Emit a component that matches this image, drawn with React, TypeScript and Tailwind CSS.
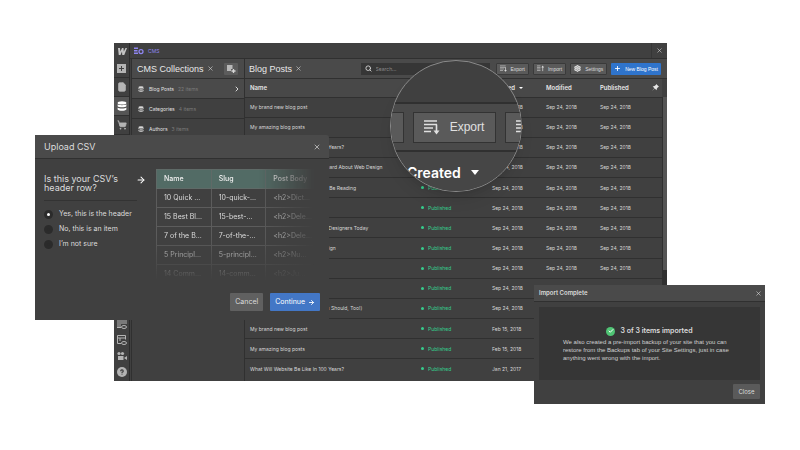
import React from "react";
import {
  ArrowRight, Check, HelpCircle, Plus, Search, Settings, ShoppingCart, X, File, ChevronRight,
} from "lucide-react";

type Row = { name: string; created: string };

const SEP = "Sep 24, 2018";
const rows: Row[] = [
  { name: "My brand new blog post", created: SEP },
  { name: "My amazing blog posts", created: SEP },
  { name: "What Will Website Be Like In 100 Years?", created: SEP },
  { name: "14 Common Things You Never Heard About Web Design", created: SEP },
  { name: "10 Web Design Blogs You Should Be Reading", created: SEP },
  { name: "Why We Love Design", created: SEP },
  { name: "7 of the Best New Tools For Web Designers Today", created: SEP },
  { name: "5 Principles of Effective Web Design", created: SEP },
  { name: "15 Best Blogs", created: SEP },
  { name: "Design Trends", created: SEP },
  { name: "Why I Love Coding (And Why You Should, Too!)", created: SEP },
  { name: "My brand new blog post", created: "Feb 15, 2018" },
  { name: "My amazing blog posts", created: "Feb 15, 2018" },
  { name: "What Will Website Be Like In 100 Years?", created: "Jan 21, 2017" },
];

const collections = [
  { name: "Blog Posts", count: "22 items" },
  { name: "Categories", count: "4 items" },
  { name: "Authors", count: "3 items" },
];

const csv = [
  ["10 Quick ...", "10-quick-...", "<h2>Dict..."],
  ["15 Best Bl...", "15-best-...", "<h2>Dele..."],
  ["7 of the B...", "7-of-the-...", "<h2>Dele..."],
  ["5 Principl...", "5-principl...", "<h2>Nu..."],
  ["14 Comm...", "14-comm...", "<h2>Ju..."],
];

function ListArrow({ up = false, className = "" }: { up?: boolean; className?: string }) {
  return (
    <svg viewBox="0 0 16 16" className={className} fill="none" stroke="currentColor" strokeWidth="1.3" aria-hidden="true">
      <path d={up ? "M0 2h8M0 5.5h8M0 9h8M0 12.5h8" : "M0 2h13M0 5.5h13M0 9h9M0 12.5h7"} />
      {up ? <path d="M13 14V4" strokeWidth="1.6" /> : <path d="M12.5 5.5v8" strokeWidth="1.6" />}
      {up ? <path d="M10 5.5 13 1l3 4.5z" fill="currentColor" stroke="none" /> : <path d="M9.5 11.5h6l-3 4z" fill="currentColor" stroke="none" />}
    </svg>
  );
}

function Stack({ className = "" }: { className?: string }) {
  return (
    <svg viewBox="0 0 16 16" className={className} fill="currentColor" aria-hidden="true">
      <ellipse cx="8" cy="3" rx="7" ry="2.6" />
      <path d="M1 5.2c1.5 1.9 12.5 1.9 14 0v3c-1.5 2.2-12.5 2.2-14 0z" />
      <path d="M1 10.5c1.5 2 12.5 2 14 0v3c-2 2.8-12 2.8-14 0z" />
    </svg>
  );
}

function SideItem({ label, active = false, children }: { label: string; active?: boolean; children: React.ReactNode }) {
  return (
    <button
      aria-label={label}
      className={`flex h-[19px] w-full shrink-0 items-center justify-center border-b border-[#303030] ${active ? "bg-[#555] text-white" : "text-[#b4b4b4]"}`}
    >
      {children}
    </button>
  );
}

function ToolButton({ children, primary = false }: { children: React.ReactNode; primary?: boolean }) {
  return (
    <button
      className={`flex h-3 shrink-0 items-center gap-1 rounded-[1px] px-[3px] font-['Liberation_Sans',sans-serif] whitespace-nowrap ${primary ? "bg-[#2f74cc] text-white" : "border border-[#3a3a3a] bg-[#5a5a5a] text-[#dcdcdc]"}`}
    >
      {children}
    </button>
  );
}

function CmsWindow() {
  return (
    <main className="mr-[133px] ml-[114px] flex h-[338px] bg-[#404040] text-[5px] leading-[8px] text-[#d8d8d8]">
      <nav className="flex w-4 shrink-0 flex-col border-r border-[#2c2c2c]">
        <div className="flex h-4 items-center justify-center">
          <svg viewBox="0 0 20 14" className="h-[7px] w-[10px]" fill="#c4c4c4" role="img" aria-label="Webflow">
            <path d="M2 0h4l.8 7L10 0h3l.6 7L17 0h3l-5.500 14h-4L10 7 7 14H3.500z" />
          </svg>
        </div>
        <SideItem label="Add"><svg viewBox="0 0 9 9" className="size-[9px]"><path fill="currentColor" fillRule="evenodd" d="M0 0h9v9H0zM4 2v2H2v1h2v2h1V5h2V4H5V2z" /></svg></SideItem>
        <SideItem label="Pages"><File className="size-[10px] fill-current" /></SideItem>
        <SideItem label="CMS" active><Stack className="size-[10px]" /></SideItem>
        <SideItem label="Ecommerce"><ShoppingCart className="size-[10px] fill-current" /></SideItem>
        <div className="mt-auto flex flex-col items-center gap-[6px] pb-1 text-[#b4b4b4]">
          <svg viewBox="0 0 10 10" className="size-[10px]" fill="none" stroke="currentColor"><path d="M1 1v7M3 1v7M5 1v4M7 1v4M9 1v4M0 .5h9M0 8.500h4" /><ellipse cx="7" cy="8" rx="2.500" ry="1.500" /></svg>
          <svg viewBox="0 0 10 10" className="size-[10px]" fill="none" stroke="currentColor"><path d="M4 8.500H.5v-8h8v4M.5 3h8M3 3v3" /><ellipse cx="7" cy="8" rx="2.500" ry="1.500" /></svg>
          <svg viewBox="0 0 10 10" className="size-[10px]" fill="currentColor"><circle cx="2" cy="2.500" r="1.600" /><circle cx="5.500" cy="2.500" r="1.600" /><path d="M1 5h5.500v4H1zM7 7l3-2v4z" /></svg>
          <HelpCircle className="size-[10px] rounded-full bg-[#b4b4b4] stroke-[#404040] stroke-[3] [&>circle]:stroke-none" />
        </div>
      </nav>
      <div className="flex min-w-0 flex-1 flex-col">
        <header className="flex h-4 shrink-0 items-center border-b border-[#303030] pl-1">
          <svg viewBox="0 0 20 16" className="mr-1 h-[8px] w-[10px] text-[#8f86f2]" fill="currentColor" aria-hidden="true">
            <path d="M0 1h8v3H0zM0 6h7v3H0zM0 11h8v3H0z" /><circle cx="14" cy="9" r="4" fill="none" stroke="currentColor" strokeWidth="2.500" />
          </svg>
          <span className="text-[#8f86f2]">CMS</span>
          <button aria-label="Close CMS" className="ml-auto flex h-full w-4 items-center justify-center border-l border-[#363636]"><X className="size-[7px]" /></button>
        </header>
        <div className="flex min-h-0 flex-1">
          <aside className="ml-px w-[114px] shrink-0 border-x border-[#303030]">
            <div className="flex h-5 items-center border-b border-[#303030] bg-[#4a4a4a] pl-[5px]">
              <h2 className="font-['Liberation_Sans',sans-serif] text-[9px] leading-3 whitespace-nowrap text-[#e8e8e8]">CMS Collections</h2>
              <button aria-label="Close collections" className="ml-[3px]"><X className="size-[7px]" /></button>
              <button aria-label="New collection" className="mr-[6px] ml-auto flex h-3 w-[14px] items-center justify-center rounded-[1px] bg-[#5c5c5c]">
                <svg viewBox="0 0 10 8" className="h-2 w-[10px]" fill="none" stroke="currentColor"><path d="M1 1h5.500M1 3h5.500M1 5h4M7.500 4v4M5.500 6h4" strokeWidth="1.300" /></svg>
              </button>
            </div>
            <ul>
              {collections.map((c, i) => (
                <li key={c.name} className={`flex h-5 items-center border-b border-[#303030] px-[6px] ${i === 0 ? "bg-[#4a4a4a]" : ""}`}>
                  <Stack className="mr-[5px] size-[6px]" />
                  <a href="#" className="text-[#e0e0e0]">{c.name}</a>
                  <span className="ml-1 text-[#7a7a7a]">{c.count}</span>
                  {i === 0 && <ChevronRight className="-mr-[3px] ml-auto size-2 stroke-[3]" />}
                </li>
              ))}
            </ul>
          </aside>
          <section className="min-w-0 flex-1">
            <div className="flex h-5 items-center border-b border-[#303030] bg-[#4a4a4a] pr-[6px] pl-1">
              <h2 className="font-['Liberation_Sans',sans-serif] text-[9px] leading-3 whitespace-nowrap text-[#e8e8e8]">Blog Posts</h2>
              <button aria-label="Close Blog Posts" className="ml-[3px]"><X className="size-[7px]" /></button>
              <label className="mr-[6px] ml-auto flex h-3 w-[129px] items-center gap-1 bg-[#363636] pl-1">
                <Search className="size-[7px] shrink-0 stroke-[3]" />
                <input aria-label="Search" placeholder="Search..." className="w-full bg-transparent outline-none placeholder:text-[#8a8a8a]" />
              </label>
              <div className="flex gap-1">
                <ToolButton><ListArrow className="size-[7px]" />Export</ToolButton>
                <ToolButton><ListArrow up className="size-[7px]" />Import</ToolButton>
                <ToolButton><Settings className="size-[7px] stroke-[4]" />Settings</ToolButton>
                <ToolButton primary><Plus className="size-[7px] stroke-[3]" />New Blog Post</ToolButton>
              </div>
            </div>
            <div className="flex">
              <table className="h-[299px] w-full table-fixed border-collapse text-left">
                <colgroup><col /><col className="w-[70px]" /><col className="w-[54px]" /><col className="w-[54px]" /><col className="w-[67px]" /></colgroup>
                <thead className="bg-[#484848] text-[6px]">
                  <tr className="h-[18px] text-[#e6e6e6]">
                    <th className="pl-[5px] font-semibold">Name</th>
                    <th className="pl-1 font-semibold">Status</th>
                    <th className="pl-[5px] font-semibold"><span className="flex items-center gap-1">Created <span className="border-x-2 border-t-2 border-x-transparent border-t-white" /></span></th>
                    <th className="pl-[5px] font-semibold">Modified</th>
                    <th className="pl-[5px] font-semibold"><span className="flex items-center justify-between pr-[3px]">Published
                      <svg viewBox="0 0 10 10" className="size-[7px]" fill="currentColor"><path d="M6 0 10 4 8.500 4.500 7 6.500 6.500 9 4 6.500 0 10 3.500 6 1 3.500 3.500 3 5.500 1.500z" /></svg></span></th>
                  </tr>
                </thead>
                <tbody>
                  {rows.map((r, i) => (
                    <tr key={i} className="border-t border-[#303030]">
                      <td className="pl-[5px] whitespace-nowrap">{r.name}</td>
                      <td className="pl-1 text-[#35cd8d]"><span className="flex items-center gap-1"><i className="size-[3px] rounded-full bg-[#35cd8d]" />Published</span></td>
                      <td className="pl-[5px] whitespace-nowrap">{r.created}</td>
                      <td className="pl-[5px] whitespace-nowrap">{SEP}</td>
                      <td className="pl-[5px] whitespace-nowrap">{SEP}</td>
                    </tr>
                  ))}
                </tbody>
              </table>
              <div className="mt-[18px] w-[5px] shrink-0 border-l border-[#303030] bg-[#555]"><div className="mt-[173px] h-[110px] bg-[#303030]" /></div>
            </div>
          </section>
        </div>
      </div>
    </main>
  );
}

function Lens() {
  return (
    <div aria-hidden="true" className="absolute top-[60px] left-[390px] size-[132px] overflow-hidden rounded-full border border-[#8a8a8a] bg-[#404040] pt-[41px] text-[#e0e0e0] shadow-lg">
      <div className="flex h-[50px] items-center justify-center gap-[9px] border-y-2 border-[#303030] bg-[#4a4a4a] pr-1">
        <div className="h-[31px] w-[82px] shrink-0 border border-[#333] bg-[#5a5a5a]" />
        <div className="flex h-[31px] w-[83px] shrink-0 items-center justify-center gap-[10px] border border-[#333] bg-[#5a5a5a] font-['Liberation_Sans',sans-serif] text-[12px]">
          <ListArrow className="size-4" />Export
        </div>
        <div className="flex h-[31px] w-[82px] shrink-0 items-center border border-[#333] bg-[#5a5a5a] pl-[10px]"><ListArrow up className="size-4" /></div>
      </div>
      <div className="flex h-10 items-center gap-[10px] bg-[#464646] pl-4 text-[14px] font-semibold text-white">
        Created<span className="border-x-4 border-t-[5px] border-x-transparent border-t-white" />
      </div>
    </div>
  );
}

function UploadDialog() {
  return (
    <section role="dialog" aria-labelledby="upload-title" className="absolute top-[135px] left-[35px] w-[294px] rounded-tr-[3px] bg-[#404040] text-[7px] leading-[10px] text-[#dcdcdc]">
      <header className="flex h-6 items-center justify-between rounded-tr-[3px] border-b border-[#303030] bg-[#4a4a4a] pr-2 pl-[9px]">
        <h2 id="upload-title" className="text-[9px]">Upload CSV</h2>
        <button aria-label="Close upload"><X className="size-2" /></button>
      </header>
      <div className="flex h-[134px] pt-[10px] pl-[9px]">
        <fieldset className="mt-[5px] w-[93px] shrink-0">
          <legend className="w-[82px] text-[9px] leading-[9px]">Is this your CSV’s header row?</legend>
          <hr className="mt-2 mb-2 border-[#333]" />
          <div className="flex flex-col gap-[5px]">
            {["Yes, this is the header", "No, this is an item", "I’m not sure"].map((t, i) => (
              <label key={t} className="flex items-center gap-[6px] whitespace-nowrap">
                <input
                  type="radio" name="header-row" defaultChecked={i === 0}
                  className="size-[9px] shrink-0 appearance-none rounded-full border-[3px] border-[#2b2b2b] bg-[#2b2b2b] checked:bg-white"
                />
                {t}
              </label>
            ))}
          </div>
        </fieldset>
        <ArrowRight className="mt-[6px] mr-[10px] -ml-px size-[10px] shrink-0 stroke-[2.5] text-white" />
        <div className="mask-[linear-gradient(to_bottom,black_60%,transparent_100%),linear-gradient(to_right,black_62%,transparent_96%)] mask-intersect h-[112px] w-[165px] overflow-hidden">
          <table className="w-full table-fixed border-collapse text-left">
            <thead><tr className="h-[19px] bg-[#526b65] text-[#f0f0f0]">
              {["Name", "Slug", "Post Body"].map((h) => <th key={h} className="border border-[#5f6a67] pl-[7px] font-medium">{h}</th>)}
            </tr></thead>
            <tbody>
              {csv.map((r) => <tr key={r[0]} className="h-[19px]">{r.map((c) => <td key={c} className="border border-[#5c5c5c] pl-[7px] whitespace-nowrap">{c}</td>)}</tr>)}
            </tbody>
          </table>
        </div>
      </div>
      <footer className="flex justify-end gap-[7px] pr-[9px] pb-[9px]">
        <button className="h-[18px] rounded-[1px] bg-[#606060] px-[5px]">Cancel</button>
        <button className="flex h-[18px] items-center gap-[3px] rounded-[1px] bg-[#4377c6] px-[5px] text-white">Continue <ArrowRight className="size-[7px] stroke-[3]" /></button>
      </footer>
    </section>
  );
}

function ImportDialog() {
  return (
    <section role="dialog" aria-labelledby="import-title" className="absolute top-[285px] left-[534px] w-[231px] bg-[#404040] text-[6px] leading-[8px] text-[#dcdcdc]">
      <header className="flex h-[17px] items-center justify-between border-b border-[#303030] bg-[#4a4a4a] pr-[3px] pl-[5px]">
        <h2 id="import-title" className="font-semibold">Import Complete</h2>
        <button aria-label="Close import"><X className="size-[7px]" /></button>
      </header>
      <div className="mx-[5px] mt-[5px] flex h-[73px] flex-col bg-[#363636] px-6 pt-[19px]">
        <p className="flex items-center justify-center gap-[5px] text-[7px] leading-[10px] font-semibold">
          <span className="flex size-[9px] items-center justify-center rounded-full bg-[#4fc474] text-white"><Check className="size-[6px] stroke-[4]" /></span>
          3 of 3 items imported
        </p>
        <p className="mt-[2px] font-['Liberation_Sans',sans-serif] text-[#cfcfcf]">We also created a pre-import backup of your site that you can restore from the Backups tab of your Site Settings, just in case anything went wrong with the import.</p>
      </div>
      <footer className="flex justify-end px-[5px] pt-1 pb-[5px]"><button className="h-[15px] w-[27px] rounded-[1px] bg-[#5a5a5a]">Close</button></footer>
    </section>
  );
}

export default function App() {
  return (
    <div className="min-h-screen bg-white font-['Inter','Liberation_Sans',sans-serif]">
      <div className="relative mx-auto w-full max-w-[800px] pt-[43px] pb-[69px]">
        <CmsWindow />
        <Lens />
        <UploadDialog />
        <ImportDialog />
      </div>
    </div>
  );
}
